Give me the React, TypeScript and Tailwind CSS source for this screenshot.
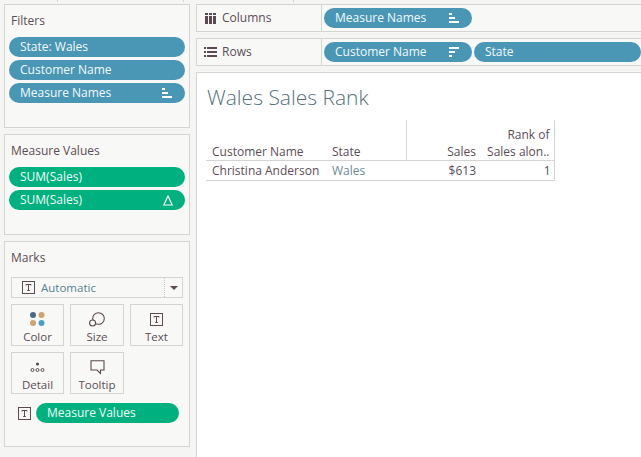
import type { ReactNode } from "react";

const font = "font-['Open_Sans',sans-serif]";

function SortAsc() {
  return (
    <svg width="11" height="11" viewBox="0 0 11 11" fill="#fff">
      <rect x="0" y="0" width="3" height="2" />
      <rect x="0" y="4" width="6" height="2" />
      <rect x="0" y="8" width="10" height="2" />
    </svg>
  );
}

function SortDesc() {
  return (
    <svg width="11" height="11" viewBox="0 0 11 11" fill="#fff">
      <rect x="0" y="0" width="10" height="2" />
      <rect x="0" y="4" width="6" height="2" />
      <rect x="0" y="8" width="3" height="2" />
    </svg>
  );
}

function TextIcon() {
  return (
    <svg width="13" height="13" viewBox="0 0 13 13" fill="none" stroke="#5b4a52">
      <rect x="0.5" y="0.5" width="12" height="12" />
      <path d="M4 4.5V3.5H9V4.5M6.5 3.5V9.5M5.2 9.5H7.8" />
    </svg>
  );
}

function Pill({ label, color = "blue", icon, className = "" }: { label: string; color?: "blue" | "green"; icon?: ReactNode; className?: string }) {
  return (
    <div
      className={`flex h-5 items-center justify-between rounded-full pl-[11px] pr-3 text-xs text-[#f2fafa] ${
        color === "blue" ? "bg-[#4a96b5]" : "bg-[#00b180]"
      } ${className}`}
    >
      <span className="whitespace-nowrap">{label}</span>
      {icon}
    </div>
  );
}

function Panel({ title, className, children }: { title: string; className: string; children: ReactNode }) {
  return (
    <section className={`border border-[#d4d4d2] bg-[#f8f8f6] px-1 ${className}`}>
      <h2 className="mt-[7px] h-[18px] pl-[2px] text-xs leading-[18px] text-[#5b4d55]">{title}</h2>
      {children}
    </section>
  );
}

function MarkButton({ label, icon, className = "" }: { label: string; icon: ReactNode; className?: string }) {
  return (
    <div className={`flex h-[42px] flex-col items-center border border-[#d4d4d2] text-[11.5px] leading-4 text-[#5b4d55] ${className}`}>
      <div className="flex h-[24px] items-center justify-center pt-1">{icon}</div>
      <span>{label}</span>
    </div>
  );
}

function Shelf({ label, icon, children, className = "" }: { label: string; icon: ReactNode; children: ReactNode; className?: string }) {
  return (
    <div className={`flex h-[28px] border-y border-l border-[#d4d4d2] bg-[#f8f8f6] ${className}`}>
      <div className="flex w-[125px] items-center gap-[5px] border-r border-[#d4d4d2] pl-[7px] text-xs text-[#5b4d55]">
        <span className="flex w-[13px] justify-center">{icon}</span>
        {label}
      </div>
      <div className="flex flex-1 items-center gap-0.5 pl-0.5">{children}</div>
    </div>
  );
}

export default function App() {
  return (
    <div className={`relative flex h-[457px] w-[641px] overflow-hidden bg-[#f5f5f3] ${font}`}>
      {/* little ticks left over from the toolbar above */}
      <span className="absolute left-[57px] top-0 h-[2px] w-px bg-[#d4d4d2]" />
      <span className="absolute left-[183px] top-0 h-[2px] w-px bg-[#d4d4d2]" />
      <span className="absolute left-[293px] top-0 h-[2px] w-px bg-[#d4d4d2]" />

      <aside className="flex w-[196px] shrink-0 flex-col gap-[6px] pl-1 pt-1">
        <Panel title="Filters" className="h-[124px] w-[186px]">
          <div className="mt-[7px] flex flex-col gap-[3px]">
            <Pill label="State: Wales" />
            <Pill label="Customer Name" />
            <Pill label="Measure Names" icon={<SortAsc />} />
          </div>
        </Panel>

        <Panel title="Measure Values" className="h-[101px] w-[186px]">
          <div className="mt-[7px] flex flex-col gap-[3px]">
            <Pill label="SUM(Sales)" color="green" />
            <Pill
              label="SUM(Sales)"
              color="green"
              icon={
                <svg width="10" height="11" viewBox="0 0 10 11" fill="none" stroke="#fff" strokeWidth="1.2">
                  <path d="M5 1L9.2 10H0.8Z" />
                </svg>
              }
            />
          </div>
        </Panel>

        <Panel title="Marks" className="h-[206px] w-[186px]">
          <div className="ml-[2px] mr-[2px] mt-[10px] flex h-[21px] items-center border border-[#d4d4d2] bg-[#f8f8f6] pl-[10px] text-[11.5px] text-[#55808f]">
            <TextIcon />
            <span className="ml-[6px] flex-1">Automatic</span>
            <span className="flex h-full w-[18px] items-center justify-center border-l border-dotted border-[#c4c4c2]">
              <span className="h-0 w-0 border-x-[4px] border-t-[4px] border-x-transparent border-t-[#5b4d55]" />
            </span>
          </div>
          <div className="ml-[2px] mr-[2px] mt-[6px] grid grid-cols-[53px_54px_53px] gap-x-[6px] gap-y-[6px]">
            <MarkButton
              label="Color"
              icon={
                <svg width="15" height="15" viewBox="0 0 15 15">
                  <circle cx="3" cy="3" r="3" fill="#4d6a85" />
                  <circle cx="11.5" cy="3" r="3" fill="#d1a36d" />
                  <circle cx="3" cy="11" r="3" fill="#d1a36d" />
                  <circle cx="11.5" cy="11" r="3" fill="#49a1c9" />
                </svg>
              }
            />
            <MarkButton
              label="Size"
              icon={
                <svg width="16" height="15" viewBox="0 0 16 15" fill="none" stroke="#5b4a52" strokeWidth="1.1">
                  <circle cx="9.5" cy="6.5" r="5.8" />
                  <circle cx="3.6" cy="11" r="3" fill="#f8f8f6" />
                </svg>
              }
            />
            <MarkButton label="Text" icon={<TextIcon />} />
            <MarkButton
              label="Detail"
              icon={
                <svg width="15" height="13" viewBox="0 0 15 13" fill="none" stroke="#5b4a52">
                  <circle cx="7.5" cy="3" r="1.6" fill="#5b4a52" stroke="none" />
                  <circle cx="2.5" cy="9" r="1.5" />
                  <circle cx="7.5" cy="9" r="1.5" />
                  <circle cx="12.5" cy="9" r="1.5" />
                </svg>
              }
            />
            <MarkButton
              label="Tooltip"
              icon={
                <svg width="15" height="15" viewBox="0 0 15 15" fill="none" stroke="#5b4a52" strokeWidth="1.1">
                  <path d="M1 .8H14V10H10.5V13.5L7 10H1Z" />
                </svg>
              }
            />
          </div>
          <div className="ml-[9px] mr-[6px] mt-[9px] flex items-center gap-[5px]">
            <TextIcon />
            <Pill label="Measure Values" color="green" className="flex-1" />
          </div>
        </Panel>
      </aside>

      <main className="flex min-w-0 flex-1 flex-col gap-[6px] pt-1">
        <Shelf
          label="Columns"
          icon={
            <svg width="11" height="11" viewBox="0 0 11 11" fill="#5b4a52">
              <rect x="0" y="0" width="3" height="2" />
              <rect x="4" y="0" width="3" height="2" />
              <rect x="8" y="0" width="3" height="2" />
              <rect x="0" y="3" width="3" height="8" />
              <rect x="4" y="3" width="3" height="8" />
              <rect x="8" y="3" width="3" height="8" />
            </svg>
          }
        >
          <Pill label="Measure Names" icon={<SortAsc />} className="w-[148px]" />
        </Shelf>
        <Shelf
          label="Rows"
          icon={
            <svg width="13" height="11" viewBox="0 0 13 11" fill="#5b4a52">
              <rect x="0" y="0" width="2" height="2" />
              <rect x="3" y="0" width="10" height="2" />
              <rect x="0" y="4" width="2" height="2" />
              <rect x="3" y="4" width="10" height="2" />
              <rect x="0" y="8" width="2" height="2" />
              <rect x="3" y="8" width="10" height="2" />
            </svg>
          }
        >
          <Pill label="Customer Name" icon={<SortDesc />} className="w-[148px]" />
          <Pill label="State" className="flex-1" />
        </Shelf>

        <div className="flex-1 border-l border-t border-[#d4d4d2] bg-white pl-[9px] pt-[11px]">
          <h1 className="h-[27px] pl-px text-[21px] font-light leading-[27px] text-[#56707c]">Wales Sales Rank</h1>
          <table className="mt-[9px] table-fixed border-collapse text-xs text-[#5b4d55]">
            <thead>
              <tr className="h-10 border-b border-[#d4d4d2] align-bottom">
                <th className="w-[122px] pl-[6px] text-left text-xs font-normal">Customer Name</th>
                <th className="w-[78px] pl-1 text-left text-xs font-normal">State</th>
                <th className="w-[75px] border-l border-[#d4d4d2] pr-[5px] text-right text-xs font-normal">Sales</th>
                <th className="w-[73px] border-r border-[#d4d4d2] pr-1 text-right text-xs font-normal leading-[17px]">
                  Rank of
                  <br />
                  Sales alon..
                </th>
              </tr>
            </thead>
            <tbody>
              <tr className="h-5 border-b border-[#d4d4d2]">
                <td className="whitespace-nowrap pl-[6px] pt-px">Christina Anderson</td>
                <td className="pl-1 pt-px text-[#6e8a96]">Wales</td>
                <td className="pr-[5px] pt-px text-right">$613</td>
                <td className="border-r border-[#d4d4d2] pr-[3px] pt-px text-right">1</td>
              </tr>
            </tbody>
          </table>
        </div>
      </main>
    </div>
  );
}
